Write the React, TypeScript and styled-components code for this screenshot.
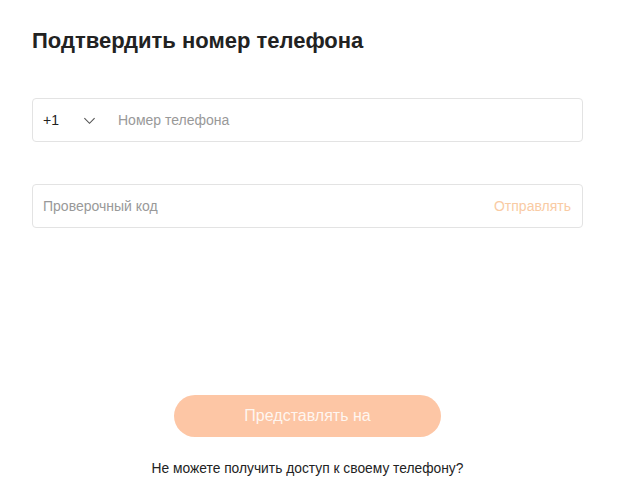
import React from "react";
import styled, { createGlobalStyle } from "styled-components";

const Global = createGlobalStyle`
  html, body { margin: 0; padding: 0; background: #fff; }
  body { font-family: "Liberation Sans", Arial, sans-serif; }
  * { box-sizing: border-box; }
`;

const Page = styled.div`
  width: 621px;
  padding: 28px 38px 0 32px;
  display: flex;
  flex-direction: column;
`;

const Title = styled.h1`
  margin: 0;
  font-size: 22px;
  line-height: 26px;
  font-weight: 700;
  color: #222;
`;

const Field = styled.div<{ $mt: number }>`
  margin-top: ${(p) => p.$mt}px;
  height: 44px;
  border: 1px solid #e3e3e3;
  border-radius: 4px;
  display: flex;
  align-items: center;
  padding: 0 11px 0 10px;
  font-size: 14px;
`;

const Code = styled.span`
  color: #222;
  width: 40px;
`;

const Chevron = styled.svg`
  width: 13px;
  height: 13px;
  margin-right: 22px;
`;

const Placeholder = styled.span`
  color: #999;
  flex: 1;
`;

const Send = styled.span`
  color: #f9cba4;
`;

const Actions = styled.div`
  margin-top: 167px;
  display: flex;
  flex-direction: column;
  align-items: center;
`;

const Submit = styled.button`
  width: 267px;
  height: 42px;
  border: none;
  border-radius: 21px;
  background: #fdc6a5;
  color: rgba(255, 255, 255, 0.85);
  font-family: inherit;
  font-size: 16px;
`;

const Help = styled.div`
  margin-top: 24px;
  font-size: 13.8px;
  color: #222;
`;

export default function App() {
  return (
    <>
      <Global />
      <Page>
        <Title>Подтвердить номер телефона</Title>
        <Field $mt={44}>
          <Code>+1</Code>
          <Chevron viewBox="0 0 14 14" fill="none" stroke="#555" strokeWidth="1.2">
            <path d="M1.5 4.5 L7 10 L12.5 4.5" />
          </Chevron>
          <Placeholder>Номер телефона</Placeholder>
        </Field>
        <Field $mt={42}>
          <Placeholder>Проверочный код</Placeholder>
          <Send>Отправлять</Send>
        </Field>
        <Actions>
          <Submit>Представлять на</Submit>
          <Help>Не можете получить доступ к своему телефону?</Help>
        </Actions>
      </Page>
    </>
  );
}
